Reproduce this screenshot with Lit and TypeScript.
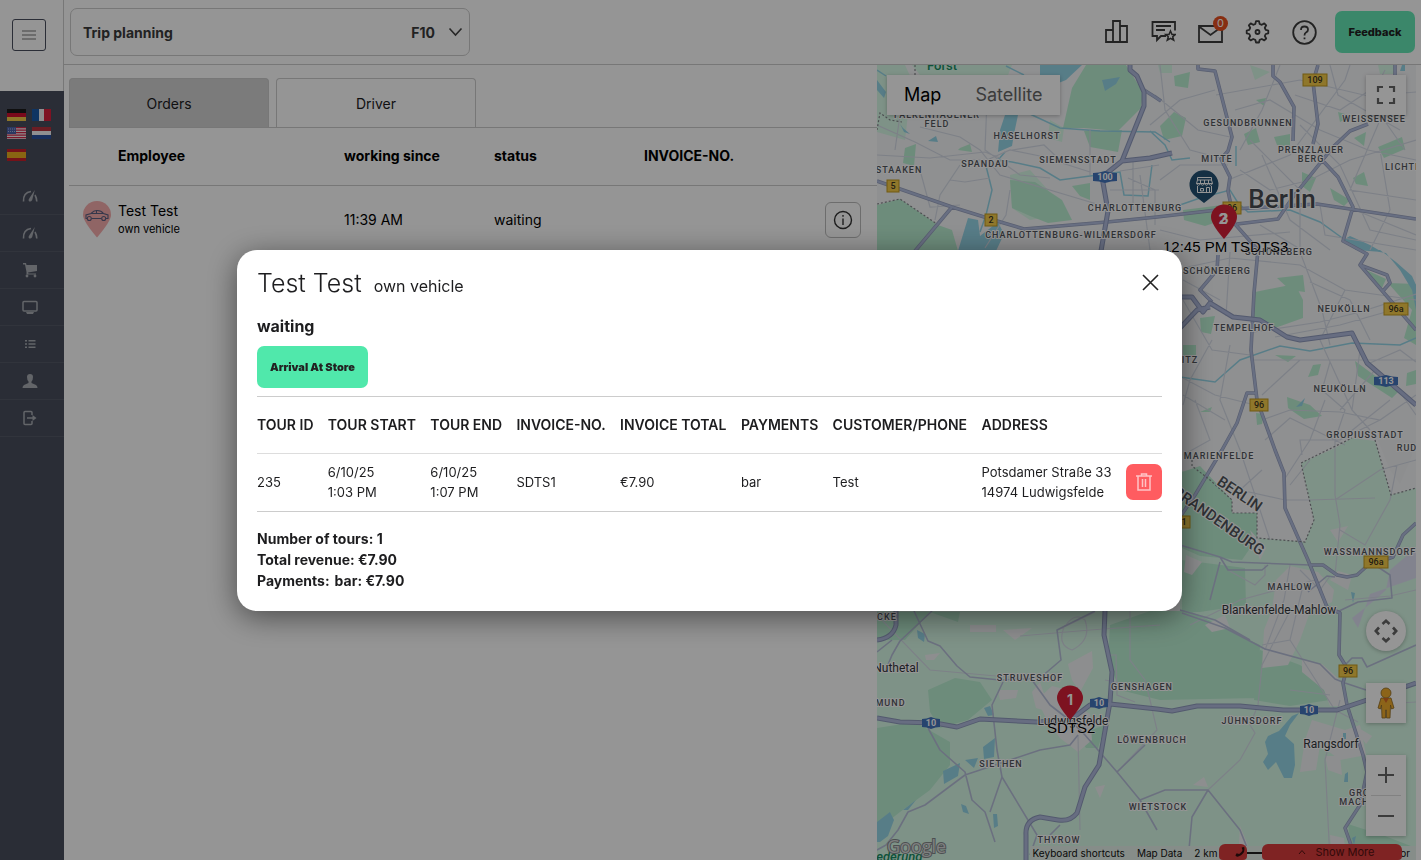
import { LitElement, html, svg, css } from "lit";
import { customElement } from "lit/decorators.js";

type Label = [string, number, number, string?];

// Map geometry, in canvas units
const FORESTS = [
  "M1063 128L1072 88L1086 65H1126L1143 92L1141 108L1118 131L1084 128Z",
  "M877 205L900 199L938 225L952 230L958 251H877Z",
  "M1010 180L1035 182L1062 200L1072 220L1048 223L1030 216L1012 208Z",
  "M1084 131L1122 130L1118 152L1090 147Z", "M1183 210L1222 205L1226 219L1205 226L1184 220Z",
  "M1072 186L1090 183L1090 200L1080 196Z", "M1174 76L1190 72L1188 88L1175 86Z",
  "M1160 126L1174 112L1186 118L1182 136L1164 140Z", "M1244 134L1256 128L1260 142L1248 145Z",
  "M1274 137L1290 134L1290 147L1277 145Z", "M1256 100L1266 98L1264 106Z",
  "M1378 147L1402 137L1405 149L1384 158Z", "M1354 138L1366 132L1364 146Z",
  "M1338 112L1352 116L1340 122Z", "M1302 172L1316 178L1310 192L1302 186Z",
  "M1353 178L1364 172L1368 186L1356 184Z", "M1330 188L1350 200L1344 206L1334 200Z",
  "M1255 292L1295 284L1303 300L1303 318L1275 328L1254 317Z",
  "M1277 278L1303 275L1305 292L1290 290Z", "M1362 268L1386 279L1382 288Z",
  "M1388 283L1416 284V345L1404 338L1412 310Z", "M1200 318L1215 316L1211 334L1201 332Z",
  "M1183 345H1196V356H1183Z", "M1287 397L1310 405L1322 416L1304 419L1288 408Z",
  "M1355 361L1378 378L1398 392L1392 398L1358 376Z", "M1256 413L1264 414L1262 424L1257 425Z",
  "M1200 412L1212 407L1210 412Z", "M1275 355L1296 356L1288 362Z",
  "M1313 365L1321 364L1318 375L1308 377Z", "M1407 373L1416 370V384L1406 386Z",
  "M1182 472L1200 466L1232 500L1232 513L1257 513V538L1242 560L1200 556L1182 548Z",
  "M1182 560L1245 568L1246 605L1200 612H1182Z",
  "M1110 625L1150 611H1190L1260 645L1258 698L1160 700L1120 690L1108 660Z",
  "M1260 650L1300 665L1322 680L1330 700L1290 706L1254 700Z",
  "M928 690L955 678L980 682L992 700L968 720L940 728L930 712Z",
  "M877 728L915 722L950 742L950 765L930 790L900 812L877 830Z",
  "M877 612L960 612L958 622L930 612L905 640L877 640Z",
  "M1077 735L1105 725L1098 748L1086 748Z", "M1348 824L1385 836L1416 848V860H1352Z",
  "M905 148L916 144L914 166L903 163Z", "M960 148L970 144L972 152L958 150Z",
];
const FIELDS = [
  "M877 65H905L912 80L905 140L877 132Z", "M912 65H1012L1008 75H920Z",
  "M1010 175L1030 170L1048 190L1060 215L1030 220L1012 208Z",
  "M1050 120L1064 128L1062 142L1048 138Z", "M1158 65H1172V73H1160Z",
  "M1378 65H1396V74H1380Z", "M1250 65L1270 72L1255 80Z",
];
const COUNTRY = [
  "M1180 470L1205 480L1232 500L1232 513L1257 513V538L1305 542L1314 520L1301 463L1335 448L1352 438L1375 441L1391 495L1416 488V860H877V611H1180Z",
];
const TOWNS = [
  "M1037 700L1052 686L1068 690L1075 705L1090 714L1092 740L1078 752L1060 738L1048 722Z",
  "M1032 692L1040 682L1050 712L1036 708Z", "M1068 664L1092 651L1093 668L1080 692L1072 680Z",
  "M1276 580L1290 566L1318 572L1334 590L1332 602L1310 612L1300 640L1288 665L1262 668L1264 630L1272 610Z",
  "M1302 660L1322 664L1340 680L1346 706H1330L1324 690L1302 672Z",
  "M1312 720L1345 730L1360 725L1366 755L1340 760L1320 745L1316 770L1300 772L1305 740Z",
  "M1352 724L1372 736L1366 744Z", "M1325 756L1340 756L1342 775L1328 770Z",
  "M1205 625L1225 615L1230 628L1212 632Z", "M1186 555L1202 562L1192 575L1184 572Z",
  "M970 625H996V632H970Z", "M1003 630L1032 628L1015 640Z", "M998 690L1018 690L1016 698L1000 700Z",
  "M925 655L940 653L934 660H926Z", "M1240 826L1250 850L1242 860H1238Z", "M1095 787L1105 785L1100 798Z",
  "M1250 530L1266 548L1260 560Z", "M1378 440L1410 440L1412 455L1400 484L1390 470Z",
  "M1330 530L1348 526L1338 542Z", "M1338 571L1352 575L1348 590L1330 580Z",
  "M1193 785L1204 777L1208 787Z", "M1330 835L1344 838L1346 860H1332Z",
];
const AIRPORT = ["M1416 548V578L1370 594L1358 628L1352 618L1375 600L1386 590L1390 570Z"];
const LAKES = [
  "M1040 65H1082L1066 80L1056 84H1040Z", "M1102 80L1120 77L1116 84L1105 91Z",
  "M1005 115H1018L1014 134L1012 146L998 152L1000 130Z", "M877 80L886 92L884 98L877 90Z",
  "M958 251L968 218L978 220L980 236L998 222L1004 234L996 251Z",
  "M900 124L904 132L910 134L903 128Z", "M928 141L936 136L938 142Z",
  "M1386 253L1400 270L1412 290L1416 310V285L1412 276L1396 262L1380 250L1366 250Z",
  "M1343 240L1356 250L1382 252L1370 245L1350 236Z",
  "M1296 407L1305 398L1302 406Z", "M1402 65H1405V71H1400Z",
  "M1279 731L1292 716L1299 713L1290 725L1285 736L1294 744L1295 765L1292 778L1284 778L1276 762L1268 770L1263 762L1268 754L1265 742L1268 736Z",
  "M943 771L960 763L958 776L944 784Z", "M983 747L995 738L994 757L984 759Z", "M965 760L978 758L974 768Z",
  "M877 822L890 812L894 820L888 836L880 842H877Z", "M961 804L966 806L969 814L963 812Z",
  "M993 814L997 814L998 826L994 828Z", "M984 708L990 706L994 715L988 716Z", "M917 630L925 634L924 642L918 638Z",
  "M1343 733H1346V739H1343Z", "M1345 774L1348 772V782L1344 782Z", "M1352 838L1356 836L1354 845Z",
  "M1351 592L1355 593L1353 603Z", "M903 810L916 800L908 810Z",
];
const RIVERS = [
  "M1010 112L1030 114L1060 128L1100 131L1155 132L1170 142", "M1005 152L998 160L1012 162L1040 168L1060 180L1090 176L1120 172L1124 195L1148 196L1152 165",
  "M986 166L992 190L986 215L980 232", "M1150 131L1165 145L1172 160L1190 158",
  "M1150 204L1180 205L1200 198L1230 190L1238 203L1248 212L1290 210L1320 222L1345 240",
  "M1180 377L1215 382L1240 360L1280 346L1310 351L1352 343L1400 345L1416 338",
  "M877 70L886 76", "M1006 66L1024 75", "M1236 146V166",
];
const MINOR = [
  "M877 125L915 142L950 160H987L1010 150L1040 156L1090 172", "M877 155L930 158L985 152L1000 158",
  "M900 115L895 150", "M920 170L930 207L960 205", "M950 180L965 182L990 178", "M920 127L960 137L980 150L1000 175L1100 205",
  "M987 100L985 150L1020 175L1050 178", "M1012 150L1044 145L1060 160", "M960 165L940 195L935 220", "M1010 190L1006 215L985 248",
  "M1090 130V175", "M1128 178L1155 190V225", "M1133 160V210", "M1120 171L1159 165", "M1140 175L1150 250", "M1110 190H1159",
  "M1155 95L1198 130L1230 137", "M1150 125L1180 100L1215 90", "M1160 65L1165 110L1190 150L1228 160",
  "M1216 95L1300 80L1368 96L1416 92", "M1235 110L1270 100L1320 130L1368 150L1416 160", "M1240 150L1262 110L1280 65",
  "M1240 170L1270 190L1310 180L1350 160L1416 140", "M1250 140L1300 190L1300 250", "M1228 180L1290 155L1345 80L1350 65",
  "M1262 155L1290 220L1330 250", "M1330 65L1338 95L1400 130", "M1380 120L1350 190L1416 200", "M1355 210L1416 235",
  "M1320 205L1325 235L1416 250", "M1380 150L1390 210L1370 250", "M1385 70L1370 100L1405 150", "M1295 95L1340 110L1385 80",
  "M1300 125L1340 165L1370 230L1416 240", "M1160 180L1180 165L1228 165", "M1160 230L1200 240L1290 232", "M1260 225L1310 255",
  "M1183 268L1230 258L1300 265L1345 290L1416 300", "M1183 280L1220 300", "M1230 252L1226 316", "M1240 250L1300 252L1322 310L1330 345",
  "M1254 332L1320 322L1360 312L1416 294", "M1275 337L1340 325L1400 308", "M1310 282L1350 300L1370 340", "M1345 290L1320 340L1352 410",
  "M1183 300L1212 350L1250 355", "M1212 340L1190 380L1183 405", "M1183 378L1215 395L1255 405", "M1250 360H1416", "M1300 360L1262 395",
  "M1262 420L1290 410L1340 412L1380 420L1416 395", "M1265 440L1290 418L1345 445", "M1330 362L1322 390L1345 410L1335 440",
  "M1360 350L1352 410L1370 430", "M1370 363L1400 350L1416 362", "M1375 370L1340 410", "M1390 400L1340 440", "M1400 392L1416 415",
  "M1195 400L1210 440L1183 455", "M1230 345L1220 400L1240 450L1270 540", "M1183 395L1225 420", "M1262 470L1240 490L1285 500H1310L1375 498",
  "M1284 480L1310 440L1325 400", "M1302 455L1300 440H1340L1380 420", "M1335 440V495L1340 525L1335 575", "M1335 500L1380 470L1416 460",
  "M1310 460L1290 485", "M1340 530L1365 545L1390 500L1397 465", "M1265 565V575L1255 585L1228 570", "M1290 565L1284 600L1265 650",
  "M1300 570L1320 590L1330 576", "M1315 580L1240 600L1190 625", "M1302 590L1290 640L1262 645", "M1345 600L1390 596L1416 590",
  "M877 615L930 670L1040 680", "M1058 630L1095 612", "M1065 625Q1056 645 1072 650Q1092 640 1085 620Q1075 612 1066 625",
  "M1130 611V660L1145 680L1150 700", "M1105 680L1130 685", "M1106 655H1116L1117 695L1135 702", "M1150 700L1157 730L1117 772",
  "M1078 735L1080 830", "M1290 611L1262 665L1258 705L1250 725L1255 733L1240 760L1208 790", "M1340 700L1325 760L1330 860",
  "M1367 705L1416 702", "M1290 640L1322 690L1335 710L1358 722", "M1290 690L1330 695", "M1020 636L1090 630L1160 625",
];
const MIDDLE = [
  "M914 611L928 641L940 646L957 666L970 677L1000 680L1040 678L1061 660L1057 630L1095 611",
  "M932 611L900 641L892 655L885 672", "M877 652L892 640", "M1003 682L992 705L997 750L1002 777L1037 835L1030 855",
  "M1002 777L990 812", "M1032 680L1050 705L1072 722L1085 735L1117 772L1140 800L1157 830", "M965 775L925 805L908 812L898 830L886 845L877 850",
  "M965 775L1040 750L1070 745L1078 735", "M928 728L940 750L965 772L972 800L985 812L995 842", "M1117 772L1145 745",
  "M1050 835L1060 825", "M1140 800L1165 790L1208 790L1240 830L1250 855", "M1208 790L1192 817L1188 860",
  "M1182 613L1225 628L1265 649L1320 664L1335 679L1345 683L1366 690", "M1345 665L1352 658H1362L1367 667L1416 645",
  "M1180 545L1220 557L1232 562L1310 565", "M1220 557L1228 570H1262L1268 565", "M1220 562L1210 600",
  "M1180 610L1215 620L1250 640", "M1337 612L1358 602L1392 598L1390 575L1375 565", "M1308 592L1327 576L1335 577",
];
const STREETS = [
  "M952 207L915 251", "M1144 90L1155 97L1161 101", "M877 181L952 207L997 221L1024 229L1107 222L1157 217L1217 210L1317 204L1416 219",
  "M1198 65V69L1215 71L1232 137L1228 151L1221 159L1230 177L1228 191L1235 224L1258 250L1254 293L1251 350L1257 400L1275 450L1284 473L1285 508L1308 560L1327 607L1340 613L1339 655L1347 668L1343 683L1347 705L1363 755L1367 772L1360 805L1345 828L1352 848",
  "M1273 65V76L1280 82L1294 107L1293 141", "M1318 65L1313 82L1318 124L1313 144", "M1395 65V75",
  "M1368 124L1350 131L1333 147L1293 197L1278 219L1237 224", "M1323 161L1338 177L1353 207L1343 241L1367 254L1360 265L1416 330",
  "M1360 265L1387 275L1390 283L1382 292", "M1218 255L1217 270L1200 290L1212 302", "M1257 393H1247L1237 423L1222 450L1195 495L1180 517",
  "M1310 565H1323L1337 575L1347 577L1357 575L1367 566L1393 557L1403 535L1416 523",
];
const MOTORWAY_LINES = [
  "M1130 65V70L1137 76L1144 92V106L1122 161L1102 177L1108 211L1101 251", "M1122 161L1150 158L1172 153",
  "M1180 297H1192L1203 312L1210 303L1233 317L1260 320L1287 337L1300 340L1352 333L1367 363L1416 405",
  "M1180 328L1197 310L1210 307",
  "M877 718L900 722L935 723L957 727L980 719L1037 722L1070 720L1090 705L1110 704L1157 709L1172 711L1197 706H1240L1283 710H1337L1367 700L1416 683",
  "M1105 611L1104 635L1112 672L1110 702L1099 765L1085 787L1077 813Q1070 822 1058 820L1040 817Q1025 820 1026 835V860",
  "M896 611L896 625Q893 638 877 640",
];
const BORDERS = [
  "M877 130L880 113L890 120L902 122", "M915 65V75", "M877 204L900 199L937 224", "M1192 460V466L1210 480L1232 500V513H1257V538L1305 542L1314 520L1301 463L1352 438", "M1375 440L1391 495L1416 488",
];

const DISTRICTS: Label[] = [
  ["FALKENHAGENER", 937, 118], ["FELD", 937, 127], ["HASELHORST", 1027, 139], ["SIEMENSSTADT", 1078, 163], ["SPANDAU", 985, 167],
  ["STAAKEN", 899, 173], ["CHARLOTTENBURG", 1135, 211], ["CHARLOTTENBURG-WILMERSDORF", 1071, 238], ["GESUNDBRUNNEN", 1248, 126],
  ["WEISSENSEE", 1374, 122], ["PRENZLAUER", 1311, 153], ["BERG", 1311, 162], ["MITTE", 1217, 162], ["LICHTENBERG", 1420, 170],
  ["SCHÖNEBERG", 1279, 255], ["SCHÖNEBERG", 1217, 274], ["NEUKÖLLN", 1344, 312], ["TEMPELHOF", 1244, 331], ["STEGLITZ", 1174, 363],
  ["NEUKÖLLN", 1340, 392], ["GROPIUSSTADT", 1365, 438], ["RUDOW", 1415, 451], ["MARIENFELDE", 1219, 459], ["WASSMANNSDORF", 1370, 555],
  ["MAHLOW", 1290, 590], ["BERGHOLZ-REHBRÜCKE", 838, 620], ["SAARMUND", 877, 706], ["STRUVESHOF", 1030, 681], ["GENSHAGEN", 1142, 690],
  ["JÜHNSDORF", 1252, 724], ["LÖWENBRUCH", 1152, 743], ["SIETHEN", 1001, 767], ["WIETSTOCK", 1158, 810], ["THYROW", 1059, 843],
  ["GROSS", 1366, 796], ["MACHNOW", 1366, 805],
];
const TOWN_NAMES: Label[] = [["Blankenfelde-Mahlow", 1279, 614], ["Nuthetal", 896, 672], ["Rangsdorf", 1331, 748], ["Ludwigsfelde", 1073, 725]];
const ROAD_SIGNS: Label[] = [["109", 1315, 80], ["5", 893, 186], ["2", 991, 220], ["96", 1232, 208], ["96a", 1396, 309], ["96", 1259, 405], ["1", 1184, 522], ["96a", 1376, 562], ["96", 1348, 671]];
const MOTORWAYS: Label[] = [["100", 1105, 177], ["113", 1386, 381], ["10", 931, 723], ["10", 1099, 703], ["10", 1309, 710]];

const paths = (list: string[], cls: string) => svg`<path class=${cls} d=${list.join("")}></path>`;

@customElement("city-map")
class CityMap extends LitElement {
  static styles = css`
    :host { display: block; position: relative; overflow: hidden; background: #f5f6f8; font-family: Inter, sans-serif; }
    .canvas { display: block; width: 100%; height: 100%; }
    .field, .country { fill: #d8fae7; }
    .forest { fill: #bbf0d3; }
    .town { fill: #f2f3f5; }
    .airport { fill: #dfe1f4; }
    .lake { fill: #96d6e8; }
    .river { fill: none; stroke: #96d6e8; stroke-width: 1.5; }
    .minor { fill: none; stroke: #d6dce7; stroke-width: 1.2; }
    .middle { fill: none; stroke: #b8c0da; stroke-width: 1.6; stroke-linejoin: round; }
    .edge, .street, .casing, .major { fill: none; stroke-linejoin: round; }
    .edge { stroke: #98a2c0; stroke-width: 3.6; }
    .street { stroke: #b3bedf; stroke-width: 2.2; }
    .casing { stroke: #8f9abd; stroke-width: 5; }
    .major { stroke: #b0bbdd; stroke-width: 3; }
    .border { fill: none; stroke: #85888d; stroke-width: 1.2; stroke-dasharray: 2 2; }
    .district, .name, .city, .state { font-family: Roboto, sans-serif; text-anchor: middle; paint-order: stroke; stroke: #fff; stroke-width: 2px; stroke-linejoin: round; fill: #50545a; }
    .district { font-size: 9px; font-weight: 500; letter-spacing: 1px; fill: #53575d; }
    .name { font-size: 12px; fill: #33373c; }
    .city { font-size: 26px; font-weight: 500; fill: #494c52; }
    .state { font-size: 15px; font-weight: 500; }
    .wood { font-family: Roboto, sans-serif; font-size: 13px; fill: #188d63; font-weight: 500; }
    .sign { font: 500 9px Roboto, sans-serif; text-anchor: middle; fill: #3d3520; }
    .sign.blue { fill: #fff; font-weight: 700; }
    .pin-label { font: 15px "Liberation Sans", sans-serif; fill: #000; paint-order: stroke; stroke: #fff; stroke-width: 1px; }
    .pin-number { font: 700 14px Inter, sans-serif; fill: #fff; text-anchor: middle; }
    .google { font: 500 18px "Open Sans", sans-serif; fill: #fff; fill-opacity: .7; stroke: #84898b; stroke-width: 2px; paint-order: stroke; }
    button { font: inherit; border: 0; background: #fff; padding: 0; cursor: pointer; display: grid; place-items: center; }
    .types { position: absolute; left: 10px; top: 10px; display: flex; height: 40px; box-shadow: 0 1px 4px #0004; }
    .types button { font-size: 18px; padding: 0 17px; color: #666; }
    .types .on { color: #000; box-shadow: 1px 0 0 #e8e8e8; }
    .full, .tools { position: absolute; right: 10px; }
    .full { top: 10px; width: 40px; height: 40px; box-shadow: 0 1px 4px #0004; }
    .tools { bottom: 24px; display: grid; gap: 32px; }
    .tools > *, .zoom button { width: 40px; }
    .round { height: 40px; border-radius: 50%; box-shadow: 0 1px 4px #0004; }
    .man { height: 40px; box-shadow: 0 1px 4px #0004; }
    .zoom { background: #fff; box-shadow: 0 1px 4px #0004; }
    .zoom button { height: 40px; }
    .zoom hr { border: 0; height: 1px; background: #ddd; margin: 0 5px; }
    .legal { position: absolute; right: 0; bottom: 0; display: flex; gap: 12px; padding: 0 6px 0 3px; height: 14px; line-height: 14px; font-size: 10px; color: #111; background: #e6f1ea; white-space: nowrap; }
    .legal a { color: inherit; text-decoration: none; }
    .scale { display: flex; align-items: center; gap: 4px; flex: none; }
    .scale i { width: 46px; height: 2px; background: #222; }
    .calls { position: absolute; right: 14px; bottom: 0; display: flex; gap: 15px; }
    .calls button { height: 16px; border-radius: 6px 6px 4px 4px; background: #d93c3c; font-size: 11px; color: #511; display: flex; align-items: center; justify-content: center; gap: 10px; }
    .phone { width: 28px; }
    .calls .phone { padding-left: 14px; }
    .more { width: 140px; }
    .calls .more { padding-left: 8px; }
  `;
  render() {
    return html`
      <svg class="canvas" viewBox="877 65 539 795" preserveAspectRatio="xMinYMin slice" role="img" aria-label="Map of Berlin">
        ${paths(FIELDS, "field")}${paths(COUNTRY, "country")}${paths(FORESTS, "forest")}${paths(TOWNS, "town")}
        ${paths(AIRPORT, "airport")}${paths(RIVERS, "river")}${paths(LAKES, "lake")}${paths(MINOR, "minor")}
        ${paths(MIDDLE, "middle")}${paths(STREETS, "edge")}${paths(STREETS, "street")}
        ${paths(MOTORWAY_LINES, "casing")}${paths(MOTORWAY_LINES, "major")}${paths(BORDERS, "border")}
        <text class="wood" x="927" y="70">Forst</text>
        <text class="wood" x="873" y="861" font-style="italic">iederung</text>
        ${DISTRICTS.map(([t, x, y]) => svg`<text class="district" x=${x} y=${y}>${t}</text>`)}
        ${TOWN_NAMES.map(([t, x, y]) => svg`<text class="name" x=${x} y=${y}>${t}</text>`)}
        <text class="state" transform="translate(1237 498) rotate(34)">BERLIN</text>
        <text class="state" transform="translate(1216 525) rotate(35)">BRANDENBURG</text>
        ${ROAD_SIGNS.map(([t, x, y]) => svg`
          <rect x=${x - t.length * 3 - 3} y=${y - 6} width=${t.length * 6 + 6} height="12" fill="#f5cc4b" stroke="#c29a1e"></rect>
          <text class="sign" x=${x} y=${y + 3}>${t}</text>`)}
        ${MOTORWAYS.map(([t, x, y]) => { const w = t.length * 3 + 3; return svg`
          <path d="M${x - w} ${y - 4}Q${x - w / 2} ${y - 4} ${x} ${y - 6}Q${x + w / 2} ${y - 4} ${x + w} ${y - 4}V${y + 4}Q${x + w / 2} ${y + 4} ${x} ${y + 6}Q${x - w / 2} ${y + 4} ${x - w} ${y + 4}Z" fill="#4475bd"></path>
          <text class="sign blue" x=${x} y=${y + 3}>${t}</text>`; })}
        <text class="city" x="1282" y="208">Berlin</text>
        <path d="M1204 203L1195 196A14.5 14.5 0 1 1 1213 196Z" fill="#235173"></path>
        <path fill="none" stroke="#fff" d="M1197.500 177.500H1211.500V180L1212.500 183.500H1196.500L1197.500 180ZM1197.500 180H1211.500M1200.500 180V183.500M1204.500 180V183.500M1208.500 180V183.500M1196.500 183.500Q1198.500 187 1200.500 183.500Q1202.500 187 1204.500 183.500Q1206.500 187 1208.500 183.500Q1210.500 187 1212.500 183.500M1197.500 186V192.500H1211.500V186M1200.500 188.500H1203.500V191H1200.500ZM1206.500 192.500V187.500H1209.500V192.500"></path>
        <text class="pin-label" x="1163" y="252">12:45 PM T</text>
        <text class="pin-label" x="1240" y="252">SDTS3</text>
        <path d="M1224 239Q1211 224 1211 217A13 12.5 0 1 1 1237 217Q1237 224 1224 239Z" fill="#d71f37"></path>
        <text class="pin-number" x="1223" y="224">2</text><text class="pin-number" x="1224" y="224">3</text>
        <text class="pin-label" x="1047" y="733">SDTS2</text>
        <path d="M1070 720Q1057 705 1057 698A13 12.5 0 1 1 1083 698Q1083 705 1070 720Z" fill="#d71f37"></path>
        <text class="pin-number" x="1070" y="705">1</text>
        <text class="google" x="887" y="853">Google</text>
      </svg>
      <div class="types"><button class="on">Map</button><button>Satellite</button></div>
      <button class="full" aria-label="Full screen"><svg width="20" height="20" fill="none" stroke="#666" stroke-width="2.200"><path d="M2 7V2H7M13 2H18V7M18 13V18H13M7 18H2V13"></path></svg></button>
      <div class="tools">
        <button class="round" aria-label="Move map"><svg width="24" height="24" fill="none" stroke="#666" stroke-width="2.600"><path d="M8.500 5L12 1.800L15.500 5M19 8.500L22.200 12L19 15.500M15.500 19L12 22.200L8.500 19M5 15.500L1.800 12L5 8.500"></path></svg></button>
        <button class="man" aria-label="Street View"><svg width="18" height="32" viewBox="0 0 18 32" fill="#f0ac2c" stroke="#8d6a25" stroke-width=".8"><path d="M4 11H14L17 21L14.500 22L13.500 18L13 31H9.500V23H8.500V31H5L4.500 18L3.500 22L1 21Z"></path><circle cx="9" cy="6" r="5"></circle><path d="M6 11H12L9 16Z" fill="#d76b24" stroke="none"></path></svg></button>
        <div class="zoom">
          <button aria-label="Zoom in"><svg width="18" height="18" stroke="#666" stroke-width="2"><path d="M9 1V17M1 9H17"></path></svg></button><hr />
          <button aria-label="Zoom out"><svg width="18" height="18" stroke="#666" stroke-width="2"><path d="M1 9H17"></path></svg></button>
        </div>
      </div>
      <div class="legal"><a href="#">Keyboard shortcuts</a><a href="#">Map Data</a><span class="scale">2 km<i></i></span><a href="#">Terms</a><a href="#">Report a map error</a></div>
      <div class="calls">
        <button class="phone" aria-label="Call"><svg width="10" height="10" viewBox="0 0 12 12" fill="#311"><path d="M8 .5L11 0Q13 8 4 11.500Q1 12 .5 10L2 7.500L5 8.500Q8 7 9 4Z"></path></svg></button>
        <button class="more"><svg width="8" height="6" fill="none" stroke="#511"><path d="M1 5L4 1.500L7 5"></path></svg>Show More</button>
      </div>`;
  }
}

const gauge = svg`<path d="M1.500 13.500Q1 4.500 9 3.500M14.800 13.500Q14.500 9.500 13 7" fill="none" stroke="currentColor" stroke-width="1.600"></path><path d="M12.800 2L10.200 12Q8.500 14.500 6.800 13Q6 12 7.500 10Z"></path>`;
const NAV = [
  { name: "Dashboard", icon: gauge },
  { name: "Statistics", icon: gauge },
  { name: "Shop", icon: svg`<path d="M1 1H4L4.500 3H15V9L6 10.500L6.500 11.500H14V12.500H4.500V10L3 2.500H1Z"></path><circle cx="5" cy="14" r="1.400"></circle><circle cx="13" cy="14" r="1.400"></circle>` },
  { name: "Screen", icon: svg`<path d="M2 2.500H14Q15 2.500 15 3.500V11Q15 12 14 12H2Q1 12 1 11V3.500Q1 2.500 2 2.500Z" fill="none" stroke="currentColor" stroke-width="1.500"></path><path d="M4 13H12L11 15H5Z"></path>` },
  { name: "Lists", icon: svg`<path d="M3 4H5V5.500H3ZM6.500 4H13.500V5.500H6.500ZM3 7.250H5V8.750H3ZM6.500 7.250H13.500V8.750H6.500ZM3 10.500H5V12H3ZM6.500 10.500H13.500V12H6.500Z"></path>` },
  { name: "Profile", icon: svg`<path d="M5 4Q5 1 8 1T11 4Q11 7 9.500 8.500V10L14 12Q15.500 13 15.500 15H.5Q.5 13 2 12L6.500 10V8.500Q5 7 5 4Z"></path>` },
  { name: "Log out", icon: svg`<path d="M10 5V2.500Q10 1.500 9 1.500H3Q2 1.500 2 2.500V13.500Q2 14.500 3 14.500H9Q10 14.500 10 13.500V11" fill="none" stroke="currentColor" stroke-width="1.500"></path><path d="M5 7.200H10.500V5L14.500 8L10.500 11V8.800H5Z"></path>` },
];
const FLAGS = [
  { name: "Deutsch", art: svg`<path d="M0 0H19V4H0Z" fill="#1a1a1a"></path><path d="M0 4H19V8H0Z" fill="#d0102f"></path><path d="M0 8H19V12H0Z" fill="#f2cb48"></path>` },
  { name: "Français", art: svg`<path d="M0 0H7V12H0Z" fill="#1a5aa8"></path><path d="M7 0H12V12H7Z" fill="#f2f2f5"></path><path d="M12 0H19V12H12Z" fill="#d8203c"></path>` },
  { name: "English", art: svg`<path d="M0 0H19V12H0Z" fill="#f5eef0"></path><path d="M0 .7H19M0 3.200H19M0 5.700H19M0 8.200H19M0 10.700H19" stroke="#d3274a" stroke-width="1.200"></path><path d="M0 0H9V7H0Z" fill="#4a61a8"></path><path d="M1 2H9M1 4.500H9" stroke="#aab6dc" stroke-dasharray="1 1"></path>` },
  { name: "Nederlands", art: svg`<path d="M0 0H19V4H0Z" fill="#b8323f"></path><path d="M0 4H19V8H0Z" fill="#f5f5f8"></path><path d="M0 8H19V12H0Z" fill="#2a519f"></path>` },
  { name: "Español", art: svg`<path d="M0 0H19V12H0Z" fill="#c8202c"></path><path d="M0 3H19V9H0Z" fill="#eaae1f"></path>` },
];
const TOOLS = [
  { name: "Reports", icon: svg`<path d="M2 10H9V22H2ZM9 1H16V22H9ZM16 6H23V22H16Z"></path>` },
  { name: "Reviews", icon: svg`<path d="M15 16H10L6 20V16H1.500V2H24V10.500M5 6H20M5 10H14"></path><path d="M19.500 11L21 14.500H24.300L21.700 16.800L22.700 20.200L19.500 18.300L16.300 20.200L17.300 16.800L14.700 14.500H18Z" stroke-width="1.500"></path>` },
  { name: "Messages", icon: svg`<path d="M1 6H24V22H1ZM1 6.500L12.500 15L24 6.500"></path>`, badge: "0" },
  { name: "Settings", icon: svg`<path d="M10.300 5L11 2.200H14L14.700 5L16.800 5.800L19.300 4.400L21.200 6.300L19.800 8.800L20.700 10.800L23.300 11.500V14.300L20.700 15L19.800 17L21.200 19.500L19.300 21.400L16.800 20L14.700 20.800L14 23.500H11L10.300 20.800L8.200 20L5.700 21.400L3.800 19.500L5.200 17L4.300 15L1.700 14.300V11.500L4.300 10.800L5.200 8.800L3.800 6.300L5.700 4.400L8.200 5.800Z" transform="translate(0 -1)" stroke-linejoin="round"></path><circle cx="12.500" cy="12" r="2"></circle>` },
  { name: "Help", icon: svg`<circle cx="12.500" cy="12.500" r="11.300"></circle><path d="M9 10Q9 6.500 12.500 6.500T16 9.700Q16 11.500 14 12.500Q12.500 13.300 12.500 15.500M12.500 17.500V19.200"></path>` },
];
const TOUR_HEADS = ["Tour ID", "Tour start", "Tour end", "Invoice-No.", "Invoice total", "Payments", "Customer/Phone", "Address", ""];

@customElement("app-root")
class AppRoot extends LitElement {
  static styles = css`
    :host { display: flex; height: 100vh; min-height: 640px; background: #fff; color: #1d1d1f; font: 14px/20px Inter, sans-serif; overflow: hidden; }
    * { box-sizing: border-box; }
    button { font: inherit; color: inherit; background: none; border: 0; padding: 0; cursor: pointer; }
    .side { width: 64px; flex: none; display: flex; flex-direction: column; }
    .top { height: 91px; padding: 19px 12px; border-right: 1px solid #ccc; }
    .burger { width: 34px; height: 32px; border: 1px solid #4a4f5e; border-radius: 3px; display: grid; place-items: center; }
    .dark { flex: 1; background: #494e5d; color: #a9adb4; }
    .flags { display: grid; grid-template-columns: 19px 19px; gap: 6px; padding: 18px 7px 17px; }
    .flags button, .flags svg { display: block; height: 12px; }
    .flags button:last-child { margin-top: 4px; }
    .nav a { height: 37px; display: grid; place-items: center; padding-right: 5px; color: inherit; border-bottom: 1px solid #555a67; }
    .main { flex: 1; min-width: 0; display: flex; flex-direction: column; }
    .head { height: 65px; flex: none; border-bottom: 1px solid #ccc; display: flex; align-items: center; padding: 0 6px; }
    .trip { width: 400px; height: 48px; border: 1px solid #ccc; border-radius: 7px; display: flex; align-items: center; padding: 1px 6px 0 12px; font-weight: 700; color: #3b3b3b; }
    .trip span:first-child { flex: 1; text-align: left; }
    .trip svg { margin: 0 0 2px 13px; }
    .tools { margin-left: auto; display: flex; gap: 22px; margin-right: 18px; }
    .tools button { position: relative; width: 25px; height: 25px; }
    .tools svg { display: block; fill: none; stroke: #3d3d3d; stroke-width: 1.800; }
    .badge { position: absolute; left: 15px; top: -4px; width: 15px; height: 15px; border-radius: 50%; background: #e8501f; color: #fff; font-size: 11px; line-height: 15px; }
    .green { height: 42px; padding: 1px 13px 0; border-radius: 7px; background: #50e8ab; font-size: 11px; font-weight: 900; color: #222; }
    .feed { background: #66e8b6; width: 80px; padding: 0; font-weight: 800; }
    .body { flex: 1; min-height: 0; display: grid; grid-template-columns: 1fr minmax(320px, 544px); }
    .list { padding: 13px 0 0 5px; min-width: 0; }
    .tabs { display: flex; gap: 7px; border-bottom: 1px solid #ccc; }
    .tabs button { width: 200px; height: 49px; border: 1px solid #ccc; border-bottom: 0; border-radius: 4px 4px 0 0; padding-top: 2px; }
    .tabs .on { background: #d2d2d2; }
    .staff { width: 100%; border-collapse: separate; border-spacing: 0; table-layout: fixed; text-align: left; color: #000; }
    .staff th { font-weight: 700; height: 58px; padding: 0 0 2px; border-bottom: 1px solid #ccc; }
    .staff td { height: 67px; padding: 0; }
    .c-pin { width: 49px; } .c-name { width: 226px; } .c-col { width: 150px; }
    .pin { display: block; margin-left: 14px; }
    .name { line-height: 19px; }
    .small { display: block; font-size: 11px; }
    .info { width: 36px; height: 36px; border: 1px solid #bbb; border-radius: 6px; display: grid; place-items: center; margin: 0 16px 0 auto; }
    city-map { margin-right: 5px; }
    .shade { position: fixed; inset: 0; background: rgba(0, 0, 0, .415); display: grid; place-items: center; padding-right: 2px; }
    .modal { width: 945px; max-width: calc(100% - 40px); background: #fff; border-radius: 20px; padding: 18px 20px 20px; box-shadow: 0 6px 30px rgba(0, 0, 0, .5); }
    .title { display: flex; align-items: baseline; gap: 12px; height: 47px; font-size: 16px; line-height: 30px; }
    .title h2 { margin: 0; font-size: 25px; font-weight: 300; line-height: 30px; }
    .close { margin-left: auto; align-self: flex-start; height: 30px; width: 23px; }
    .close svg { display: block; margin: auto; }
    .state { margin: 0; font-size: 16px; line-height: 22px; font-weight: 700; padding-bottom: 9px; }
    .tours { width: 100%; margin: 8px 0 16px; border-collapse: separate; border-spacing: 0; text-align: left; font-size: 13px; border: solid #ccc; border-width: 1px 0; }
    .tours th { font-size: 14px; font-weight: 600; text-transform: uppercase; height: 57px; padding: 0 14px 0 0; border-bottom: 1px solid #ddd; white-space: nowrap; }
    .tours td { height: 57px; padding: 0 14px 0 0; white-space: nowrap; }
    .tours th:last-child, .tours td:last-child { padding: 0; width: 36px; }
    .bin { width: 36px; height: 36px; display: grid; place-items: center; border-radius: 7px; background: #ff5c60; }
    .sums { font-weight: 700; line-height: 21px; }
    .sums p { margin: 0; }
    .sums b { font-weight: inherit; margin-left: 5px; }
  `;
  render() {
    return html`
      <aside class="side">
        <div class="top"><button class="burger" aria-label="Menu"><svg width="14" height="12" stroke="#a3a3a3" stroke-width="1.500"><path d="M0 2H14M0 6H14M0 10H14"></path></svg></button></div>
        <div class="dark">
          <div class="flags">${FLAGS.map((f) => html`<button aria-label=${f.name}><svg width="19" height="12">${f.art}</svg></button>`)}</div>
          <nav class="nav">${NAV.map((n) => html`<a href="#" aria-label=${n.name}><svg width="16" height="16" fill="currentColor">${n.icon}</svg></a>`)}</nav>
        </div>
      </aside>
      <div class="main">
        <header class="head">
          <button class="trip" aria-haspopup="listbox"><span>Trip planning</span><span>F10</span><svg width="15" height="10" fill="none" stroke="#444" stroke-width="1.600"><path d="M1.500 1.500L7.500 8L13.500 1.500"></path></svg></button>
          <div class="tools">${TOOLS.map((t) => html`<button aria-label=${t.name}><svg width="25" height="25">${t.icon}</svg>${t.badge ? html`<span class="badge">${t.badge}</span>` : ""}</button>`)}</div>
          <button class="green feed">Feedback</button>
        </header>
        <div class="body">
          <section class="list">
            <div class="tabs"><button class="on">Orders</button><button>Driver</button></div>
            <table class="staff">
              <colgroup><col class="c-pin" /><col class="c-name" /><col class="c-col" /><col class="c-col" /><col /></colgroup>
              <thead><tr><th></th><th>Employee</th><th>working since</th><th>status</th><th>INVOICE-NO.</th></tr></thead>
              <tbody><tr>
                <td><svg class="pin" width="28" height="37"><path d="M14 36.500Q0 20 0 14A14 14 0 0 1 28 14Q28 20 14 36.500Z" fill="#f7adad"></path><g fill="none" stroke="#5c5f80" stroke-width="1.100"><path d="M4 17.500H3V14L8 12.500Q11 9.500 13 9.500Q18 9 20.500 12.500L25 14V17.500H23M8.500 17.500H18.500M8 12.500H20.500M13.500 9.500V12.500"></path><circle cx="6.300" cy="17.500" r="2"></circle><circle cx="20.700" cy="17.500" r="2"></circle></g></svg></td>
                <td class="name">Test Test<span class="small">own vehicle</span></td><td>11:39 AM</td><td>waiting</td>
                <td><button class="info" aria-label="Details"><svg width="20" height="20" fill="none" stroke="#333" stroke-width="1.400"><circle cx="10" cy="10" r="8.500"></circle><path d="M10 8.500V15M10 5V6.800"></path></svg></button></td>
              </tr></tbody>
            </table>
          </section>
          <city-map></city-map>
        </div>
      </div>
      <div class="shade">
        <section class="modal" role="dialog" aria-label="Test Test">
          <div class="title"><h2>Test Test</h2><span>own vehicle</span><button class="close" aria-label="Close"><svg width="17" height="17" stroke="#222" stroke-width="1.600"><path d="M1 1L16 16M16 1L1 16"></path></svg></button></div>
          <h3 class="state">waiting</h3>
          <button class="green">Arrival At Store</button>
          <table class="tours">
            <thead><tr>${TOUR_HEADS.map((h) => html`<th>${h}</th>`)}</tr></thead>
            <tbody><tr>
              <td>235</td><td>6/10/25<br />1:03 PM</td><td>6/10/25<br />1:07 PM</td><td>SDTS1</td><td>€7.90</td><td>bar</td><td>Test</td>
              <td>Potsdamer Straße 33<br />14974 Ludwigsfelde</td>
              <td><button class="bin" aria-label="Delete"><svg width="16" height="18" fill="none" stroke="#ffc4c6" stroke-width="1.500"><path d="M0 3H16M5.500 3V1H10.500V3M2 3V17H14V3M6.500 6V14M9.500 6V14"></path></svg></button></td>
            </tr></tbody>
          </table>
          <div class="sums"><p>Number of tours: 1</p><p>Total revenue: €7.90</p><p>Payments:<b>bar: €7.90</b></p></div>
        </section>
      </div>`;
  }
}
